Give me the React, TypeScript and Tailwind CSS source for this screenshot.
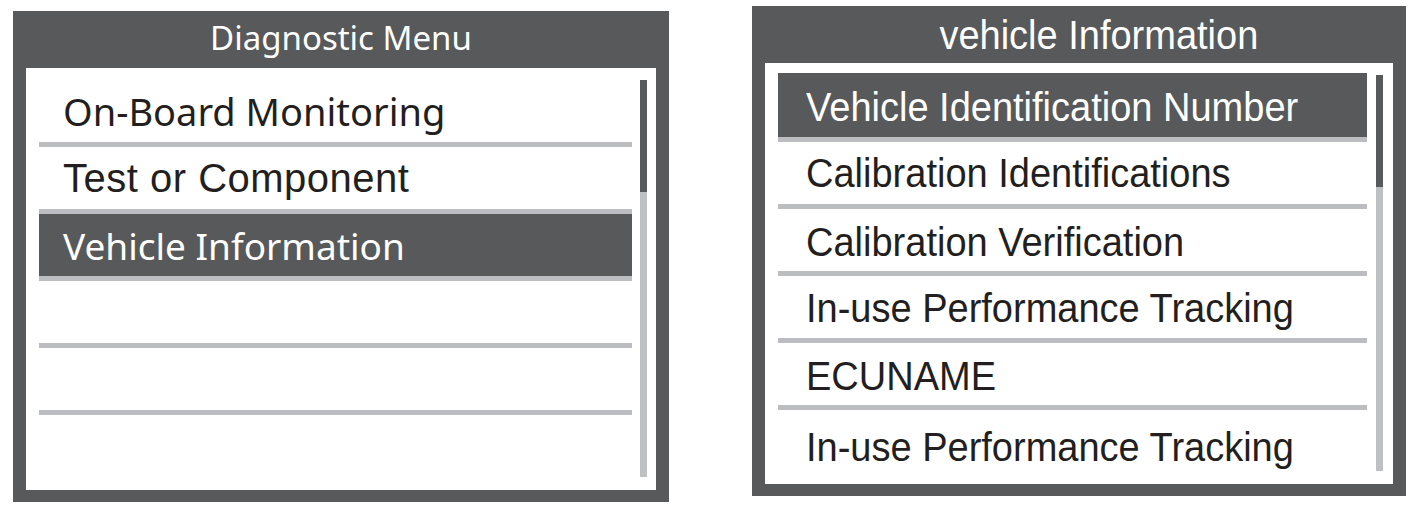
const ARIAL = "font-['Liberation_Sans',Arial,sans-serif]"
const HUMAN = "font-['Noto_Sans',sans-serif]"

type Row = {
  label: string
  font: string
  size: string
  selected?: boolean
  narrow?: boolean
  extra?: string
}

const LEFT_ROWS: Row[] = [
  { label: 'On-Board Monitoring', font: HUMAN, size: 'text-[38px]' },
  { label: 'Test or Component', font: ARIAL, size: 'text-[40px]', extra: 'tracking-[0.5px]' },
  { label: 'Vehicle Information', font: HUMAN, size: 'text-[37px]', selected: true },
  { label: '', font: ARIAL, size: 'text-[40px]' },
  { label: '', font: ARIAL, size: 'text-[40px]' },
  { label: '', font: ARIAL, size: 'text-[40px]' },
]

const RIGHT_ROWS: Row[] = [
  { label: 'Vehicle Identification Number', font: ARIAL, size: 'text-[40px]', selected: true, narrow: true, extra: 'pt-[4px]' },
  { label: 'Calibration Identifications', font: ARIAL, size: 'text-[40px]', narrow: true },
  { label: 'Calibration Verification', font: ARIAL, size: 'text-[40px]', narrow: true, extra: 'pt-[3px]' },
  { label: 'In-use Performance Tracking', font: ARIAL, size: 'text-[40px]', narrow: true, extra: 'pt-[2px]' },
  { label: 'ECUNAME', font: ARIAL, size: 'text-[40px]', narrow: true, extra: 'pt-[3px]' },
  { label: 'In-use Performance Tracking', font: ARIAL, size: 'text-[40px]', narrow: true, extra: 'pt-[12px]' },
]

// rows are border-box: 62px of content plus a 5px rule underneath
function MenuList({ rows, indent, firstTall }: { rows: Row[]; indent: string; firstTall?: boolean }) {
  return (
    <div className="flex flex-1 flex-col">
      {rows.map((r, i) => {
        const last = i === rows.length - 1
        const height = last ? 'h-[62px]' : i === 0 && firstTall ? 'h-[69px]' : 'h-[67px]'
        return (
          <div
            key={i}
            className={[
              'flex shrink-0 items-center whitespace-nowrap leading-none',
              height,
              last ? '' : 'border-b-[5px] border-[#bcbdc0]',
              r.selected ? 'bg-[#58595b] text-white' : 'text-[#231f20]',
              indent,
              r.font,
              r.size,
              r.extra ?? '',
            ].join(' ')}
          >
            <span className={r.narrow ? 'inline-block origin-left scale-x-[0.95]' : ''}>{r.label}</span>
          </div>
        )
      })}
    </div>
  )
}

function Scrollbar({ className = '' }: { className?: string }) {
  return (
    <div className={`flex w-[7px] flex-col ${className}`}>
      <div className="h-[112px] bg-[#58595b]" />
      <div className="flex-1 bg-[#bfc0c2]" />
    </div>
  )
}

export default function App() {
  return (
    <div className="flex h-[513px] w-[1422px] items-start bg-white">
      {/* left screen */}
      <div className="ml-[13px] mt-[11px] flex h-[491px] w-[656px] flex-col bg-[#58595b] px-[13px] pb-[12px]">
        <div className={`flex h-[57px] shrink-0 items-center justify-center pb-[3px] text-[33px] text-white ${HUMAN}`}>
          Diagnostic Menu
        </div>
        <div className="flex flex-1 gap-[8px] bg-white pb-[13px] pl-[13px] pr-[9px] pt-[12px]">
          <MenuList rows={LEFT_ROWS} indent="pl-[24px]" />
          <Scrollbar />
        </div>
      </div>

      {/* right screen */}
      <div className="ml-[83px] mt-[6px] flex h-[490px] w-[654px] flex-col bg-[#58595b] px-[13px] pb-[13px]">
        <div className={`flex h-[57px] shrink-0 items-center justify-center pl-[40px] text-[40px] leading-none text-white ${ARIAL}`}>
          <span className="inline-block scale-x-[0.95]">vehicle Information</span>
        </div>
        <div className="flex flex-1 gap-[9px] bg-white pb-[12px] pl-[13px] pr-[10px] pt-[10px]">
          <MenuList rows={RIGHT_ROWS} indent="pl-[28px]" firstTall />
          <Scrollbar className="mb-[1px] mt-[2px]" />
        </div>
      </div>
    </div>
  )
}
